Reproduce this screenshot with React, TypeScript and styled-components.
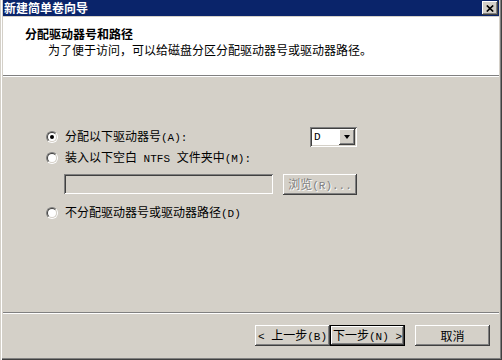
import React from "react";
import styled, { createGlobalStyle, css } from "styled-components";

const FACE = "#d4d0c8";
const SHADOW = "#808080";
const DARK = "#404040";
const HILITE = "#ffffff";
const NAVY = "#0a246a";

const GlobalStyle = createGlobalStyle`
  html, body {
    margin: 0;
    padding: 0;
    background: ${FACE};
  }
  body {
    font-family: "SimSun", "Noto Sans CJK SC", sans-serif;
    font-size: 12px;
    color: #000;
    overflow: hidden;
  }
`;

const raised = css`
  box-shadow: inset -1px -1px ${DARK}, inset 1px 1px ${HILITE},
    inset -2px -2px ${SHADOW}, inset 2px 2px ${FACE};
`;

const sunken = css`
  box-shadow: inset 1px 1px ${SHADOW}, inset -1px -1px ${HILITE},
    inset 2px 2px ${DARK}, inset -2px -2px ${FACE};
`;

const Window = styled.div`
  width: 502px;
  height: 360px;
  box-sizing: border-box;
  padding: 0 3px 3px 3px;
  display: flex;
  flex-direction: column;
  background: ${FACE};
  box-shadow: inset 1px 0 ${FACE}, inset 2px 0 ${HILITE},
    inset -1px -1px ${DARK}, inset -2px -2px ${SHADOW};
`;

const TitleBar = styled.div`
  height: 16px;
  flex: none;
  display: flex;
  align-items: center;
  justify-content: space-between;
  padding: 0 1px 0 1px;
  margin-bottom: 1px;
  background: ${NAVY};
  color: #fff;
  font-weight: bold;
  line-height: 14px;
`;

const CloseButton = styled.div`
  width: 16px;
  height: 14px;
  display: flex;
  align-items: center;
  justify-content: center;
  background: ${FACE};
  ${raised};
`;

const Header = styled.div`
  height: 58px;
  flex: none;
  box-sizing: border-box;
  padding: 10px 0 0 22px;
  background: #fff;
`;

const HeaderTitle = styled.div`
  font-weight: bold;
  line-height: 14px;
`;

const HeaderSub = styled.div`
  padding-left: 23px;
  margin-top: 2px;
  line-height: 14px;
`;

const Rule = styled.div`
  height: 0;
  flex: none;
  border-top: 1px solid ${SHADOW};
  border-bottom: 1px solid ${HILITE};
`;

const Body = styled.div`
  flex: 1;
  padding: 49px 0 0 43px;
`;

const Options = styled.div`
  width: 311px;
  display: flex;
  flex-direction: column;
`;

const Row = styled.div<{ $gap?: number }>`
  height: 21px;
  display: flex;
  align-items: center;
  margin-top: ${(p) => p.$gap ?? 0}px;
`;

const Radio = styled.span<{ $checked?: boolean }>`
  position: relative;
  flex: none;
  width: 12px;
  height: 12px;
  box-sizing: border-box;
  border-radius: 50%;
  border: 1px solid;
  border-color: ${SHADOW} ${HILITE} ${HILITE} ${SHADOW};

  &::before {
    content: "";
    position: absolute;
    inset: 0;
    box-sizing: border-box;
    border-radius: 50%;
    border: 1px solid;
    border-color: ${DARK} ${FACE} ${FACE} ${DARK};
    background: #fff;
  }

  &::after {
    content: "";
    display: ${(p) => (p.$checked ? "block" : "none")};
    position: absolute;
    left: 3px;
    top: 3px;
    width: 4px;
    height: 4px;
    border-radius: 50%;
    background: #000;
  }
`;

const Label = styled.span`
  margin-left: 7px;
  white-space: nowrap;
  line-height: 14px;
`;

const Half = styled.span`
  font-family: "Liberation Mono", monospace;
  font-size: 11px;
`;

const Combo = styled.div`
  margin-left: auto;
  width: 47px;
  height: 20px;
  box-sizing: border-box;
  padding: 2px;
  display: flex;
  align-items: stretch;
  background: #fff;
  ${sunken};
`;

const ComboText = styled.div`
  flex: 1;
  padding-left: 2px;
  display: flex;
  align-items: center;
`;

const DropButton = styled.div`
  width: 16px;
  display: flex;
  align-items: center;
  justify-content: center;
  background: ${FACE};
  ${raised};
`;

const Arrow = styled.span`
  width: 0;
  height: 0;
  border-left: 3.5px solid transparent;
  border-right: 3.5px solid transparent;
  border-top: 4px solid #000;
`;

const FieldRow = styled.div`
  margin-top: 6px;
  padding-left: 18px;
  height: 21px;
  display: flex;
  gap: 10px;
`;

const TextField = styled.div`
  width: 209px;
  height: 20px;
  background: ${FACE};
  ${sunken};
`;

const Button = styled.button<{ $default?: boolean; $width?: number }>`
  width: ${(p) => p.$width ?? 75}px;
  height: 21px;
  box-sizing: border-box;
  padding: 0;
  margin: 0;
  border: ${(p) => (p.$default ? "1px solid #000" : "none")};
  background: ${FACE};
  font-family: inherit;
  font-size: 12px;
  line-height: 14px;
  color: #000;
  white-space: nowrap;
  ${raised};

  &:disabled {
    color: ${SHADOW};
    text-shadow: 1px 1px ${HILITE};
  }
`;

const Footer = styled.div`
  flex: none;
  height: 43px;
  box-sizing: border-box;
  display: flex;
  justify-content: flex-end;
  align-items: flex-start;
  padding: 11px 9px 0 0;
`;

const Spacer = styled.div`
  width: 10px;
`;

const CloseGlyph = () => (
  <svg width="8" height="7" viewBox="0 0 8 7">
    <path d="M0.8 0.5 L7.2 6.5 M7.2 0.5 L0.8 6.5" stroke="#000" strokeWidth="1.7" />
  </svg>
);

export default function App() {
  return (
    <>
      <GlobalStyle />
      <Window>
        <TitleBar>
          <span>新建简单卷向导</span>
          <CloseButton>
            <CloseGlyph />
          </CloseButton>
        </TitleBar>

        <Header>
          <HeaderTitle>分配驱动器号和路径</HeaderTitle>
          <HeaderSub>为了便于访问，可以给磁盘分区分配驱动器号或驱动器路径。</HeaderSub>
        </Header>
        <Rule />

        <Body>
          <Options>
            <Row>
              <Radio $checked />
              <Label>
                分配以下驱动器号<Half>(A):</Half>
              </Label>
              <Combo>
                <ComboText>
                  <Half>D</Half>
                </ComboText>
                <DropButton>
                  <Arrow />
                </DropButton>
              </Combo>
            </Row>
            <Row>
              <Radio />
              <Label>
                装入以下空白<Half> NTFS </Half>文件夹中<Half>(M):</Half>
              </Label>
            </Row>
            <FieldRow>
              <TextField />
              <Button disabled $width={74}>
                浏览<Half>(R)...</Half>
              </Button>
            </FieldRow>
            <Row $gap={7}>
              <Radio />
              <Label>
                不分配驱动器号或驱动器路径<Half>(D)</Half>
              </Label>
            </Row>
          </Options>
        </Body>

        <Rule />
        <Footer>
          <Button>
            <Half>&lt; </Half>上一步<Half>(B)</Half>
          </Button>
          <Button $default>
            下一步<Half>(N) &gt;</Half>
          </Button>
          <Spacer />
          <Button>取消</Button>
        </Footer>
      </Window>
    </>
  );
}
